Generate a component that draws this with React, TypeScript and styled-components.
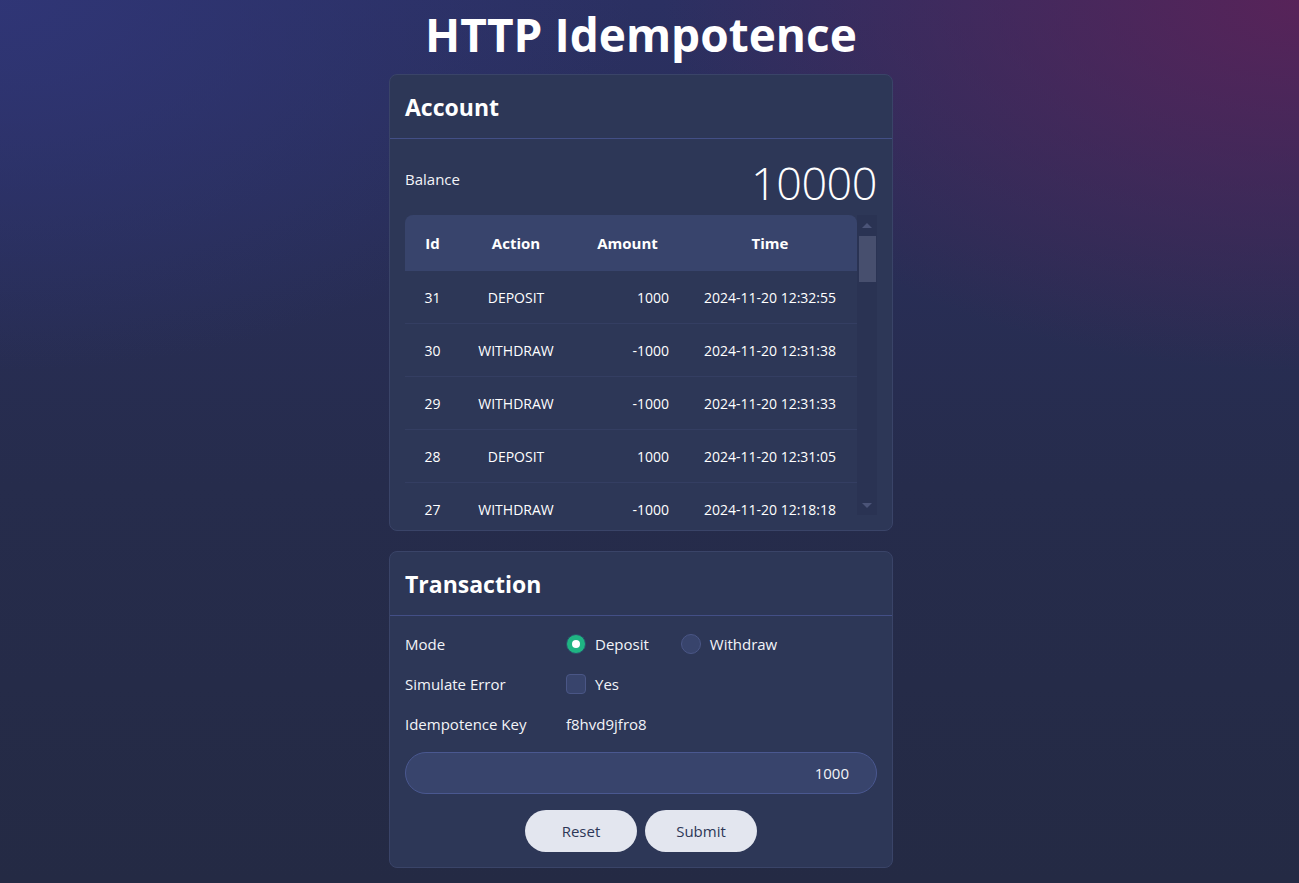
import styled, { createGlobalStyle } from 'styled-components';

const GlobalStyle = createGlobalStyle`
  html, body {
    margin: 0;
    padding: 0;
  }
  body {
    min-height: 100vh;
    font-family: "Open Sans", "Noto Sans", sans-serif;
    color: #f3f4f8;
    background:
      radial-gradient(ellipse 70% 60% at 100% 0%, rgba(92, 34, 88, 0.9), rgba(92, 34, 88, 0) 70%),
      radial-gradient(ellipse 70% 60% at 0% 0%, rgba(48, 54, 120, 0.9), rgba(48, 54, 120, 0) 70%),
      linear-gradient(180deg, #2b3062 0%, #262c4c 55%, #242a44 100%);
    background-attachment: fixed;
  }
`;

const Page = styled.div`
  display: flex;
  flex-direction: column;
  align-items: center;
  padding: 4px 17px 16px 0;
  gap: 20px;
`;

const Title = styled.h1`
  margin: 0 0 -10px;
  font-size: 46px;
  line-height: 60px;
  font-weight: 700;
  color: #ffffff;
`;

const Card = styled.section`
  width: 504px;
  box-sizing: border-box;
  background: #2d3757;
  border: 1px solid #3a4468;
  border-radius: 8px;
`;

const CardHeader = styled.div`
  height: 63px;
  display: flex;
  align-items: center;
  padding: 0 15px;
  border-bottom: 1px solid #434f86;
`;

const CardTitle = styled.h2`
  margin: 0;
  font-size: 23px;
  font-weight: 700;
  color: #ffffff;
`;

const CardBody = styled.div<{ $top: number }>`
  padding: ${(p) => p.$top}px 15px 15px;
`;

const BalanceRow = styled.div`
  display: flex;
  align-items: center;
  justify-content: space-between;
  height: 66px;
`;

const Label = styled.span`
  font-size: 15px;
`;

const BalanceLabel = styled(Label)`
  margin-bottom: 6px;
`;

const BalanceValue = styled.span`
  font-size: 45px;
  font-weight: 300;
  letter-spacing: -0.5px;
  color: #ffffff;
`;

const TableFrame = styled.div`
  display: flex;
  height: 300px;
  background: #2a3353;
`;

const ScrollArea = styled.div`
  flex: 1;
  overflow-y: auto;
  scrollbar-width: none;
  &::-webkit-scrollbar {
    display: none;
  }
`;

const ScrollBar = styled.div`
  width: 20px;
  display: flex;
  flex-direction: column;
  align-items: center;
  background: #2a3353;
`;

const Arrow = styled.div<{ $down?: boolean }>`
  height: 20px;
  width: 100%;
  display: flex;
  align-items: center;
  justify-content: center;

  &::before {
    content: '';
    width: 0;
    height: 0;
    border-left: 5px solid transparent;
    border-right: 5px solid transparent;
    ${(p) => (p.$down ? 'border-top: 5px solid #4b5478;' : 'border-bottom: 5px solid #4b5478;')}
  }
`;

const Track = styled.div`
  flex: 1;
  width: 17px;
  padding-top: 1px;
`;

const Thumb = styled.div`
  height: 46px;
  background: #474f6e;
`;

const Table = styled.table`
  width: 100%;
  table-layout: fixed;
  border-collapse: separate;
  border-spacing: 0;
  font-size: 14px;
  background: #2d3757;
`;

const Th = styled.th<{ $w: number }>`
  position: sticky;
  top: 0;
  width: ${(p) => p.$w}px;
  height: 56px;
  padding: 0;
  background: #38446c;
  font-weight: 700;
  font-size: 15px;
  text-align: center;
  color: #ffffff;

  &:first-child {
    border-top-left-radius: 8px;
  }
  &:last-child {
    border-top-right-radius: 8px;
  }
`;

const Td = styled.td<{ $right?: boolean }>`
  height: 52px;
  padding: 0 ${(p) => (p.$right ? '14px' : '0')} 0 0;
  text-align: ${(p) => (p.$right ? 'right' : 'center')};
  border-bottom: 1px solid #343e62;
  color: #ffffff;
  white-space: nowrap;
`;

const FormRow = styled.div`
  display: grid;
  grid-template-columns: 161px 1fr;
  align-items: center;
  height: 40px;
  font-size: 15px;
`;

const Options = styled.div`
  display: flex;
  align-items: center;
  gap: 32px;
`;

const Option = styled.label`
  display: flex;
  align-items: center;
  gap: 9px;
`;

const Radio = styled.span<{ $on?: boolean }>`
  width: 20px;
  height: 20px;
  box-sizing: border-box;
  border-radius: 50%;
  background: ${(p) => (p.$on ? '#1fb583' : '#38446c')};
  border: 1px solid ${(p) => (p.$on ? '#2b4f6a' : '#4a5686')};
  display: flex;
  align-items: center;
  justify-content: center;

  &::after {
    content: '';
    display: ${(p) => (p.$on ? 'block' : 'none')};
    width: 8px;
    height: 8px;
    border-radius: 50%;
    background: #ffffff;
  }
`;

const Checkbox = styled.span`
  width: 20px;
  height: 20px;
  box-sizing: border-box;
  border-radius: 4px;
  background: #38446c;
  border: 1px solid #4a5686;
`;

const AmountInput = styled.input`
  display: block;
  width: 100%;
  box-sizing: border-box;
  height: 42px;
  margin-top: 8px;
  padding: 0 27px;
  border-radius: 21px;
  border: 1px solid #4a5890;
  background: #38446c;
  color: #f3f4f8;
  font-family: inherit;
  font-size: 15px;
  text-align: right;
  outline: none;
`;

const Buttons = styled.div`
  display: flex;
  justify-content: center;
  gap: 8px;
  margin-top: 16px;
`;

const Button = styled.button`
  width: 112px;
  height: 42px;
  border: none;
  border-radius: 21px;
  background: #e3e6ef;
  color: #2d3757;
  font-family: inherit;
  font-size: 15px;
  cursor: pointer;
`;

type Tx = { id: number; action: 'DEPOSIT' | 'WITHDRAW'; time: string };

const known: Tx[] = [
  { id: 31, action: 'DEPOSIT', time: '2024-11-20 12:32:55' },
  { id: 30, action: 'WITHDRAW', time: '2024-11-20 12:31:38' },
  { id: 29, action: 'WITHDRAW', time: '2024-11-20 12:31:33' },
  { id: 28, action: 'DEPOSIT', time: '2024-11-20 12:31:05' },
  { id: 27, action: 'WITHDRAW', time: '2024-11-20 12:18:18' },
];

const rows: Tx[] = [
  ...known,
  ...Array.from({ length: 26 }, (_, i) => {
    const id = 26 - i;
    const min = 17 - Math.floor(i / 2);
    return {
      id,
      action: (i % 2 === 0 ? 'DEPOSIT' : 'WITHDRAW') as Tx['action'],
      time: `2024-11-20 12:${String(min).padStart(2, '0')}:${String((i * 7) % 60).padStart(2, '0')}`,
    };
  }),
];

export default function App() {
  return (
    <>
      <GlobalStyle />
      <Page>
        <Title>HTTP Idempotence</Title>

        <Card>
          <CardHeader>
            <CardTitle>Account</CardTitle>
          </CardHeader>
          <CardBody $top={10}>
            <BalanceRow>
              <BalanceLabel>Balance</BalanceLabel>
              <BalanceValue>10000</BalanceValue>
            </BalanceRow>
            <TableFrame>
              <ScrollArea>
                <Table>
                  <thead>
                    <tr>
                      <Th $w={55}>Id</Th>
                      <Th $w={112}>Action</Th>
                      <Th $w={111}>Amount</Th>
                      <Th $w={174}>Time</Th>
                    </tr>
                  </thead>
                  <tbody>
                    {rows.map((r) => (
                      <tr key={r.id}>
                        <Td>{r.id}</Td>
                        <Td>{r.action}</Td>
                        <Td $right>{r.action === 'DEPOSIT' ? '1000' : '-1000'}</Td>
                        <Td>{r.time}</Td>
                      </tr>
                    ))}
                  </tbody>
                </Table>
              </ScrollArea>
              <ScrollBar>
                <Arrow />
                <Track>
                  <Thumb />
                </Track>
                <Arrow $down />
              </ScrollBar>
            </TableFrame>
          </CardBody>
        </Card>

        <Card>
          <CardHeader>
            <CardTitle>Transaction</CardTitle>
          </CardHeader>
          <CardBody $top={8}>
            <FormRow>
              <Label>Mode</Label>
              <Options>
                <Option>
                  <Radio $on />
                  Deposit
                </Option>
                <Option>
                  <Radio />
                  Withdraw
                </Option>
              </Options>
            </FormRow>
            <FormRow>
              <Label>Simulate Error</Label>
              <Option>
                <Checkbox />
                Yes
              </Option>
            </FormRow>
            <FormRow>
              <Label>Idempotence Key</Label>
              <span>f8hvd9jfro8</span>
            </FormRow>
            <AmountInput defaultValue="1000" />
            <Buttons>
              <Button>Reset</Button>
              <Button>Submit</Button>
            </Buttons>
          </CardBody>
        </Card>
      </Page>
    </>
  );
}
